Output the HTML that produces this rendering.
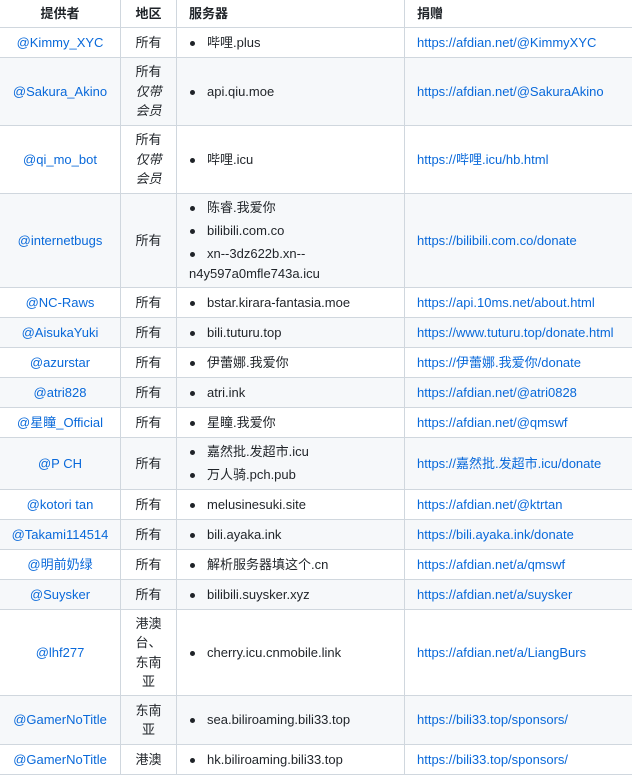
<!DOCTYPE html>
<html><head><meta charset="utf-8"><style>
body{margin:0;width:632px;height:775px;overflow:hidden;background:#fff;font-family:"Liberation Sans","Noto Sans CJK SC",sans-serif;font-size:13px;color:#1f2328}
table{border-collapse:collapse;table-layout:fixed;width:650px;position:absolute;left:-1px;top:-1px}
td,th{border:1px solid #d0d7de;padding:0 12px;line-height:19.5px;vertical-align:middle}
th{font-weight:bold;text-align:left;height:27px}
th.c,td.c{text-align:center;padding:0 6px}
tr:nth-child(odd) td{background:#f6f8fa}
a{color:#0969da;text-decoration:none}
ul{list-style:none;margin:0;padding:0}
li{position:relative;padding-left:18px;margin:1px 0;line-height:20px}
li:before{content:"";position:absolute;left:1px;top:8px;width:5px;height:5px;border-radius:50%;background:#1f2328}
li.w{padding-left:0;text-indent:18px}
li+li{margin-top:3px}
i{font-style:italic}
</style></head><body>
<table>
<colgroup><col style="width:121px"><col style="width:56px"><col style="width:228px"><col style="width:245px"></colgroup>
<tr><th class="c">提供者</th><th class="c">地区</th><th>服务器</th><th>捐赠</th></tr>
<tr style="height:30px"><td class="c"><a>@Kimmy_XYC</a></td><td class="c">所有</td><td><ul><li>哔哩.plus</li></ul></td><td><a>https://afdian.net/@KimmyXYC</a></td></tr>
<tr style="height:68px"><td class="c"><a>@Sakura_Akino</a></td><td class="c">所有<br><i>仅带<br>会员</i></td><td><ul><li>api.qiu.moe</li></ul></td><td><a>https://afdian.net/@SakuraAkino</a></td></tr>
<tr style="height:68px"><td class="c"><a>@qi_mo_bot</a></td><td class="c">所有<br><i>仅带<br>会员</i></td><td><ul><li>哔哩.icu</li></ul></td><td><a>https://哔哩.icu/hb.html</a></td></tr>
<tr style="height:94px"><td class="c"><a>@internetbugs</a></td><td class="c">所有</td><td><ul><li>陈睿.我爱你</li><li>bilibili.com.co</li><li class="w">xn--3dz622b.xn--<br>n4y597a0mfle743a.icu</li></ul></td><td><a>https://bilibili.com.co/donate</a></td></tr>
<tr style="height:30px"><td class="c"><a>@NC-Raws</a></td><td class="c">所有</td><td><ul><li>bstar.kirara-fantasia.moe</li></ul></td><td><a>https://api.10ms.net/about.html</a></td></tr>
<tr style="height:30px"><td class="c"><a>@AisukaYuki</a></td><td class="c">所有</td><td><ul><li>bili.tuturu.top</li></ul></td><td><a>https://www.tuturu.top/donate.html</a></td></tr>
<tr style="height:30px"><td class="c"><a>@azurstar</a></td><td class="c">所有</td><td><ul><li>伊蕾娜.我爱你</li></ul></td><td><a>https://伊蕾娜.我爱你/donate</a></td></tr>
<tr style="height:30px"><td class="c"><a>@atri828</a></td><td class="c">所有</td><td><ul><li>atri.ink</li></ul></td><td><a>https://afdian.net/@atri0828</a></td></tr>
<tr style="height:30px"><td class="c"><a>@星瞳_Official</a></td><td class="c">所有</td><td><ul><li>星瞳.我爱你</li></ul></td><td><a>https://afdian.net/@qmswf</a></td></tr>
<tr style="height:52px"><td class="c"><a>@P CH</a></td><td class="c">所有</td><td><ul><li>嘉然批.发超市.icu</li><li>万人骑.pch.pub</li></ul></td><td><a>https://嘉然批.发超市.icu/donate</a></td></tr>
<tr style="height:30px"><td class="c"><a>@kotori tan</a></td><td class="c">所有</td><td><ul><li>melusinesuki.site</li></ul></td><td><a>https://afdian.net/@ktrtan</a></td></tr>
<tr style="height:30px"><td class="c"><a>@Takami114514</a></td><td class="c">所有</td><td><ul><li>bili.ayaka.ink</li></ul></td><td><a>https://bili.ayaka.ink/donate</a></td></tr>
<tr style="height:30px"><td class="c"><a>@明前奶绿</a></td><td class="c">所有</td><td><ul><li>解析服务器填这个.cn</li></ul></td><td><a>https://afdian.net/a/qmswf</a></td></tr>
<tr style="height:30px"><td class="c"><a>@Suysker</a></td><td class="c">所有</td><td><ul><li>bilibili.suysker.xyz</li></ul></td><td><a>https://afdian.net/a/suysker</a></td></tr>
<tr style="height:86px"><td class="c"><a>@lhf277</a></td><td class="c">港澳<br>台、<br>东南<br>亚</td><td><ul><li>cherry.icu.cnmobile.link</li></ul></td><td><a>https://afdian.net/a/LiangBurs</a></td></tr>
<tr style="height:49px"><td class="c"><a>@GamerNoTitle</a></td><td class="c">东南<br>亚</td><td><ul><li>sea.biliroaming.bili33.top</li></ul></td><td><a>https://bili33.top/sponsors/</a></td></tr>
<tr style="height:30px"><td class="c"><a>@GamerNoTitle</a></td><td class="c">港澳</td><td><ul><li>hk.biliroaming.bili33.top</li></ul></td><td><a>https://bili33.top/sponsors/</a></td></tr>
</table>
</body></html>
